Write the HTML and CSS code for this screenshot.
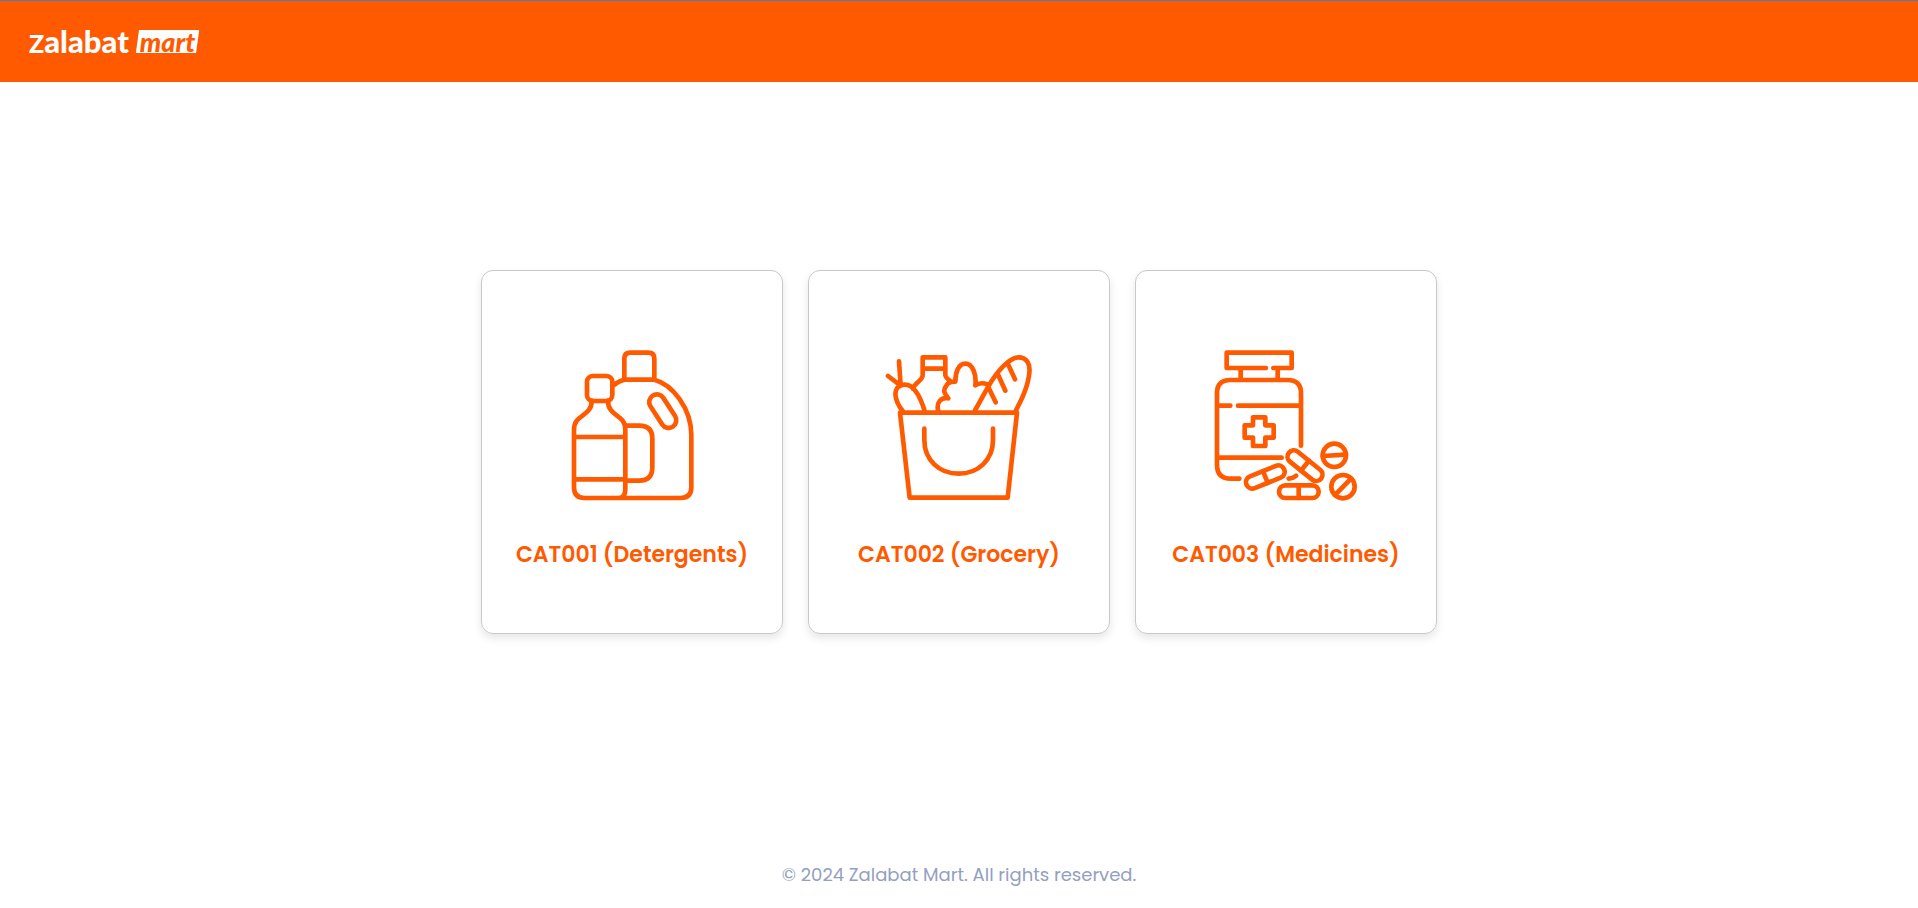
FILE: index.html
```html
<!DOCTYPE html>
<html lang="en">
<head>
<meta charset="utf-8">
<meta name="viewport" content="width=device-width, initial-scale=1">
<title>Zalabat Mart</title>
<link rel="stylesheet" href="styles.css">
</head>
<body>
<header class="header">
  <a class="logo" href="#"><span class="logo-name">Zalabat</span><span class="logo-tag">mart</span></a>
</header>
<main class="categories">
  <a class="card" href="#">
    <svg class="icon" viewBox="-8 33 450 450" aria-hidden="true">
      <path d="M194 119V56Q194 38 212 38H266Q284 38 284 56V119M163 135Q174 124 194 119H284C338 133 395 205 395 285V442Q395 474 363 474H74Q43 474 43 442V270C43 220 96 232 96 182M145 182C145 232 197 220 197 270V448Q197 474 177 474M43 291H197M43 418H197M197 257H239Q278 257 278 296V382Q278 422 239 422H197"/>
      <rect x="82" y="108" width="76" height="75" rx="18"/>
      <rect x="286" y="158" width="46" height="111" rx="23" transform="rotate(-33 309 213)"/>
    </svg>
    <span class="label">CAT001 (Detergents)</span>
  </a>
  <a class="card" href="#">
    <svg class="icon" viewBox="43 33 450 450" aria-hidden="true">
      <path d="M91 218H442L414 473H120ZM164 266V300C164 360 209 401 267 401S370 360 370 300V266M99 213C76 184 68 148 92 137C130 122 152 170 165 213M55 108L93 137L88 64M130 146C136 126 159 123 159 106V52H227V106C229 116 238 119 244 125M159 86H227M206 213C199 190 213 170 236 175C225 161 218 151 230 137C235 128 244 124 257 125C257 98 266 71 287 71C309 71 321 104 317 136C328 128 340 128 354 133M315 213L354 143C382 92 421 52 446 52C473 52 482 73 479 99C475 141 455 180 438 213M354 137L378 187M384 101L407 152M413 68L436 118"/>
    </svg>
    <span class="label">CAT002 (Grocery)</span>
  </a>
  <a class="card" href="#">
    <svg class="icon" viewBox="34 33 450 450" aria-hidden="true">
      <path d="M199 84H81V38H276V84H221M123 84V119M234 84V119M304 317V160Q304 120 264 120H92Q52 120 52 160V374Q52 416 94 416H119M52 197H92M115 197H304M52 353H246M160 232H197V256H222V293H197V318H160V293H135V256H160ZM267 416Q280 415 289 407"/>
      <circle cx="404" cy="346" r="35"/>
      <path d="M369 348L439 344"/>
      <circle cx="430" cy="440" r="35"/>
      <path d="M406 465L454 416"/>
      <rect x="238" y="436" width="119" height="38" rx="19"/>
      <path d="M297 436V474"/>
      <g transform="rotate(-22 197 411)"><rect x="136" y="392" width="122" height="38" rx="19"/><path d="M197 392V430"/></g>
      <g transform="rotate(39 316 377)"><rect x="254" y="358" width="124" height="38" rx="19"/><path d="M316 358V396"/></g>
    </svg>
    <span class="label">CAT003 (Medicines)</span>
  </a>
</main>
<footer class="footer">© 2024 Zalabat Mart. All rights reserved.</footer>
</body>
</html>
```
FILE: styles.css
```css
* {
  box-sizing: border-box;
}

body {
  display: flex;
  flex-direction: column;
  min-height: 100vh;
  margin: 0;
  background: #fff;
  font-family: Poppins, Inter, sans-serif;
}

.header {
  display: flex;
  align-items: center;
  min-height: 82px;
  padding: 0 29px;
  border-top: 1px solid #4a7fb5;
  background: #ff5a00;
}

.logo {
  display: flex;
  align-items: center;
  gap: 7px;
  color: #fff;
  font-family: Lato, sans-serif;
  font-size: 31px;
  font-weight: 900;
  line-height: 24px;
  text-decoration: none;
}

.logo-name::first-letter {
  font-size: 25px;
}

.logo-tag {
  padding: 0 4px;
  background: #fff;
  clip-path: polygon(5% 0, 100% 0, 95% 100%, 0 100%);
  color: #ff5a00;
  font-size: 27px;
  font-style: italic;
  line-height: 23px;
}

.categories {
  display: flex;
  flex: 1;
  flex-wrap: wrap;
  align-items: center;
  justify-content: center;
  gap: 25px;
  padding: 24px 24px 44px;
}

.card {
  display: flex;
  flex-direction: column;
  align-items: center;
  gap: 36px;
  width: 302px;
  padding: 80px 16px 60px;
  border: 1px solid #c8c8c8;
  border-radius: 12px;
  box-shadow: 0 4px 8px rgba(0, 0, 0, 0.1);
  color: #ff5a00;
  text-decoration: none;
}

.icon {
  width: 150px;
  height: 150px;
  overflow: visible;
  fill: none;
  stroke: currentColor;
  stroke-width: 14;
  stroke-linecap: round;
  stroke-linejoin: round;
}

.label {
  font-size: 22px;
  font-weight: 600;
  line-height: 36px;
  white-space: nowrap;
}

.footer {
  padding: 20px;
  color: #94a0c0;
  font-size: 18px;
  line-height: 27px;
  text-align: center;
}
```
